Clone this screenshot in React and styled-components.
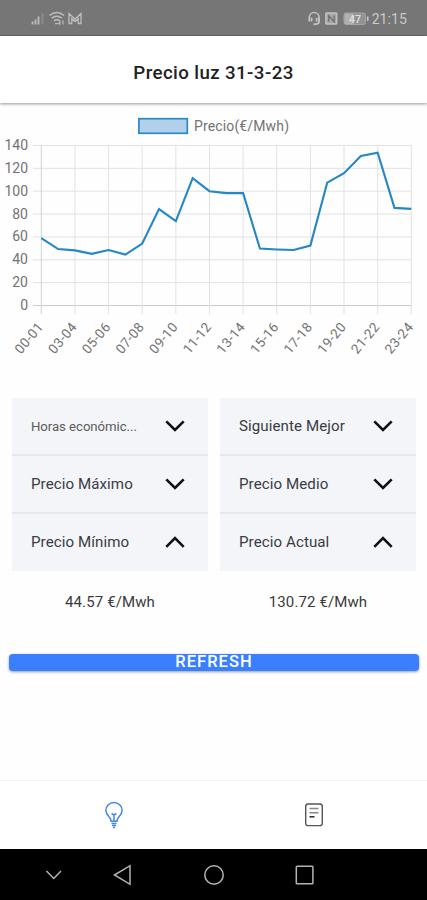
import React, { useState } from 'react'
import styled, { createGlobalStyle } from 'styled-components'

const GlobalStyle = createGlobalStyle`
* {
    box-sizing: border-box;
}

body {
    margin: 0;
    background: #fff;
    font-family: Roboto, "Liberation Sans", sans-serif;
}
`;

const Screen = styled.div`
display: flex;
flex-direction: column;
height: 900px;
overflow: hidden;
background: #fefefe;
`;

const StatusBar = styled.div`
flex: 0 0 36px;
display: flex;
justify-content: space-between;
background: #767676;
border-bottom: 1px solid #6a6a6a;
`;

const StatusIcons = styled.svg`
display: block;
width: ${({ $width }) => $width}px;
height: 35px;
`;

const StatusRight = styled.div`
display: flex;
align-items: center;
padding-right: 20px;
`;

const Clock = styled.span`
color: #c9c9c9;
font-size: 14px;
line-height: 16px;
letter-spacing: 0.1px;
padding-top: 2px;
`;

const Header = styled.header`
flex: 0 0 67px;
display: flex;
align-items: center;
justify-content: center;
padding-top: 7px;
background: #fff;
box-shadow: 0 1px 3px rgba(0, 0, 0, 0.42);
`;

const Title = styled.h1`
margin: 0;
font-size: 18.7px;
font-weight: 500;
line-height: 24px;
letter-spacing: 0.4px;
color: #222;
`;

const Chart = styled.svg`
flex: 0 0 257px;
display: block;
width: 427px;
height: 257px;
margin-top: 7px;
font-size: 14px;
fill: #737373;
`;

const Panels = styled.div`
display: grid;
grid-template-columns: 196px 196px;
column-gap: 12px;
margin: 31px 0 0 12px;
`;

const Panel = styled.div`
display: flex;
flex-direction: column;
`;

const Item = styled.button`
display: flex;
align-items: center;
justify-content: space-between;
height: ${({ $last }) => ($last ? 57 : 58)}px;
padding: 0 22px ${({ $last }) => ($last ? 2 : 0)}px 19px;
border: 0;
border-bottom: ${({ $last }) => ($last ? '0' : '2px solid #e6e8eb')};
background: #f3f5f9;
font-family: inherit;
font-size: ${({ $small }) => ($small ? 13.2 : 15.1)}px;
letter-spacing: ${({ $small }) => ($small ? -0.05 : 0.08)}px;
color: ${({ $small }) => ($small ? '#5c5c5c' : '#3a3c40')};
text-align: left;
`;

const Label = styled.span`
width: 112px;
white-space: nowrap;
`;

const Chevron = styled.svg`
width: 22px;
height: 14px;
fill: none;
stroke: #111;
stroke-width: 2.6;
`;

const Value = styled.p`
margin: 0;
padding-top: 21px;
font-size: 15px;
line-height: 21px;
letter-spacing: 0.12px;
text-align: center;
color: #3a3a3a;
`;

const Refresh = styled.button`
flex: 0 0 17px;
display: flex;
align-items: center;
justify-content: center;
margin: 41px 8px 0 9px;
padding: 0 0 1px;
border: 0;
border-radius: 4px;
background: #3a7fff;
box-shadow: 0 1px 3px rgba(0, 0, 0, 0.4);
color: #fff;
font-family: inherit;
font-size: 16.5px;
font-weight: 500;
line-height: 16px;
letter-spacing: 1.05px;
`;

const Tabs = styled.nav`
flex: 0 0 69px;
display: grid;
grid-template-columns: 228px 171px;
align-items: center;
margin-top: auto;
border-top: 1px solid #f1f1f1;
background: #fff;
`;

const Tab = styled.button`
display: flex;
justify-content: center;
padding: 0;
border: 0;
background: none;
color: ${({ $active }) => ($active ? '#4388e8' : '#555')};

svg {
    display: block;
    fill: none;
    stroke: currentColor;
}
`;

const SystemBar = styled.div`
flex: 0 0 51px;
background: #000;

svg {
    display: block;
    fill: none;
    stroke: #b4b4b4;
    stroke-width: 1.5;
}
`;

const prices = [
  59, 49.4, 48.2, 45.2, 48.5, 44.57, 54.2, 84.3, 73.8, 111.4, 100, 98.3,
  98.3, 49.8, 49, 48.5, 52.4, 107.5, 115.8, 130.72, 133.7, 85.4, 84.5,
]

const hours = [
  '00-01', '03-04', '05-06', '07-08', '09-10', '11-12',
  '13-14', '15-16', '17-18', '19-20', '21-22', '23-24',
]

const ticks = [0, 20, 40, 60, 80, 100, 120, 140]

const left = 41.3
const right = 411.3
const bottom = 195.5
const step = (right - left) / (prices.length - 1)
const toX = (i) => left + i * step
const toY = (v) => bottom - v * 1.143

const columns = [
  {
    items: ['Horas económic...', 'Precio Máximo', 'Precio Mínimo'],
    value: '44.57 €/Mwh',
  },
  {
    items: ['Siguiente Mejor', 'Precio Medio', 'Precio Actual'],
    value: '130.72 €/Mwh',
  },
]

const PriceChart = () => (
  <Chart viewBox="0 0 427 257">
    <rect x="138.9" y="8.7" width="48.4" height="14.6" fill="#b3d0eb" stroke="#2a88c4" strokeWidth="1.7" />
    <text x="194" y="20.5" textLength="95">Precio(€/Mwh)</text>
    {ticks.map((t) => (
      <g key={t}>
        <line x1="33" x2={right} y1={toY(t)} y2={toY(t)} stroke={t === 0 ? '#ccc' : '#e2e2e2'} />
        <text x="28" y={toY(t) + 4.5} textAnchor="end">{t}</text>
      </g>
    ))}
    {hours.map((h, i) => (
      <g key={h}>
        <line x1={toX(i * 2)} x2={toX(i * 2)} y1="35.5" y2="204" stroke={i === 0 ? '#d2d2d2' : '#e2e2e2'} />
        <text
          transform={`translate(${toX(i * 2) + 2.5} 217.5) rotate(-50)`}
          textAnchor="end"
          textLength="35.5"
          fontSize="13.5"
        >
          {h}
        </text>
      </g>
    ))}
    <polyline
      points={prices.map((p, i) => `${toX(i)},${toY(p)}`).join(' ')}
      fill="none"
      stroke="#2587c3"
      strokeWidth="2.1"
    />
  </Chart>
)

const PricePanel = ({ items, value }) => {
  const [open, setOpen] = useState(2)

  return (
    <Panel>
      {items.map((item, i) => (
        <Item
          key={item}
          $last={i === 2}
          $small={item.endsWith('...')}
          onClick={() => setOpen(i)}
        >
          <Label>{item}</Label>
          <Chevron viewBox="0 0 22 14">
            <path d={open === i ? 'M2.3 11.8 11 3.2l8.7 8.6' : 'M2.3 2.4 11 11l8.7-8.6'} />
          </Chevron>
        </Item>
      ))}
      <Value>{value}</Value>
    </Panel>
  )
}

const App = () => {
  return (
    <>
      <GlobalStyle />
      <Screen>
        <StatusBar>
          <StatusIcons $width={90} viewBox="0 0 90 35" fill="none" stroke="#bdbdbd">
            <path d="M32.5 24.5v-3M35.5 24.5v-5M38.5 24.5v-8" strokeWidth="1.8" />
            <path d="M42.5 24.5v-11" stroke="#8c8c8c" strokeWidth="2" />
            <path d="M49.5 15.5q7.3-6 14.6 0M51.8 18.2q5-4 10 0M54 20.8q2.8-2.2 5.6 0" strokeWidth="1.5" />
            <path d="M55 23.6h3M60 20.5v4m-1.5-1.5 1.5 1.5M63 24.5v-4" strokeWidth="1.2" />
            <path d="M69 23.5v-10l6 5.5 6-5.5v10h-2.8v-5L75 21.5l-3.2-3v5z" strokeWidth="1.3" />
          </StatusIcons>
          <StatusRight>
            <StatusIcons $width={65} viewBox="306 0 65 35" fill="none" stroke="#c4c4c4">
              <path d="M308.3 18v-.6a4.9 4.9 0 0 1 9.8 0v4.1q0 2.5-3.6 2.7" strokeWidth="1.6" />
              <path d="M308.3 17.5v4M310.6 17.8v3.6M315.6 17.8v3.6M318 17.5v4" strokeWidth="1.7" />
              <path d="M312.5 24.2h2.5" strokeWidth="1.8" />
              <rect x="324.8" y="13" width="11" height="11" rx="0.8" fill="#a6a6a6" strokeWidth="1.3" />
              <path d="M327.7 21.8v-6l5.4 6v-6.4" stroke="#707070" strokeWidth="1.3" />
              <rect x="343" y="13" width="21.5" height="11.5" rx="2" fill="#929292" stroke="#a4a4a4" />
              <rect x="343.5" y="13.5" width="9" height="10.5" fill="#b0b0b0" stroke="none" />
              <path d="M366.7 16.5v4.5" strokeWidth="1.6" />
              <text x="354" y="22.7" textAnchor="middle" fontSize="10.5" fontWeight="500" fill="#e0e0e0" stroke="none">47</text>
            </StatusIcons>
            <Clock>21:15</Clock>
          </StatusRight>
        </StatusBar>
        <Header>
          <Title>Precio luz 31-3-23</Title>
        </Header>
        <PriceChart />
        <Panels>
          {columns.map((c) => (
            <PricePanel key={c.value} items={c.items} value={c.value} />
          ))}
        </Panels>
        <Refresh>REFRESH</Refresh>
        <Tabs>
          <Tab $active>
            <svg width="20" height="28" viewBox="0 0 20 28" strokeWidth="1.5">
              <path d="M7.1 20.3c0-4.5-5.2-5.7-5.2-10.8a8.1 8.1 0 0 1 16.2 0c0 5.1-5.2 6.3-5.2 10.8z" />
              <path d="M7.6 12.5 10 14l2.4-1.5M10 14v6M7.5 22.5h5M8 24.6h4M9 26.4h2" />
            </svg>
          </Tab>
          <Tab>
            <svg width="20" height="26" viewBox="0 0 20 26" strokeWidth="1.4">
              <rect x="1.7" y="2" width="16.6" height="21.6" rx="2.4" />
              <path d="M5.5 6.4h9M5.5 10.8h9" stroke="#888" strokeWidth="1.5" />
              <path d="M5.5 14.8h5" stroke="#333" strokeWidth="1.6" />
            </svg>
          </Tab>
        </Tabs>
        <SystemBar>
          <svg width="427" height="51" viewBox="0 0 427 51">
            <path d="m46.5 22 7.3 7.5L61 22" />
            <path d="M114.5 26 130 16.7v18.6z" />
            <circle cx="214" cy="26" r="9.2" />
            <rect x="296.3" y="17.3" width="16.6" height="17.4" rx="0.8" />
          </svg>
        </SystemBar>
      </Screen>
    </>
  )
}

export default App
